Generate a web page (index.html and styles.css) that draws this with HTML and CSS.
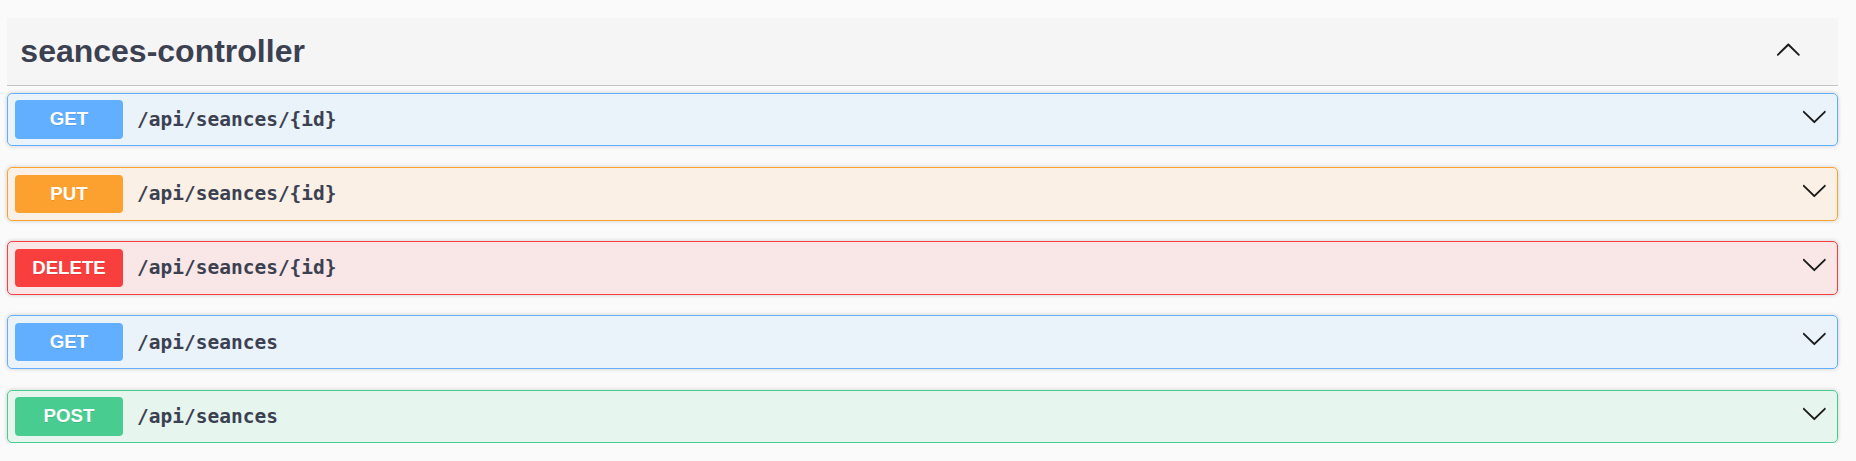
FILE: index.html
```html
<!DOCTYPE html>
<html>
<head>
<meta charset="utf-8">
<link rel="stylesheet" href="styles.css">
</head>
<body>
<div class="wrapper">
  <section class="tag-section">
    <h3 class="tag">
      <span class="tag-title">seances-controller</span>
      <svg class="tag-arrow" viewBox="0 0 20 20" width="26.67" height="26.67"><path transform="rotate(180 10 10)" d="M17.418 6.109c.272-.268.709-.268.979 0s.271.701 0 .969l-7.908 7.83c-.27.268-.707.268-.979 0l-7.908-7.830c-.27-.268-.27-.701 0-.969.271-.268.709-.268.979 0L10 13.25l7.418-7.141z"/></svg>
    </h3>
    <div class="ops">
      <div class="opblock get">
        <span class="method">GET</span>
        <span class="path">/api/seances/{id}</span>
        <svg class="op-arrow" viewBox="0 0 20 20" width="26.67" height="26.67"><path d="M17.418 6.109c.272-.268.709-.268.979 0s.271.701 0 .969l-7.908 7.83c-.27.268-.707.268-.979 0l-7.908-7.83c-.27-.268-.27-.701 0-.969.271-.268.709-.268.979 0L10 13.25l7.418-7.141z"/></svg>
      </div>
      <div class="opblock put">
        <span class="method">PUT</span>
        <span class="path">/api/seances/{id}</span>
        <svg class="op-arrow" viewBox="0 0 20 20" width="26.67" height="26.67"><path d="M17.418 6.109c.272-.268.709-.268.979 0s.271.701 0 .969l-7.908 7.83c-.27.268-.707.268-.979 0l-7.908-7.83c-.27-.268-.27-.701 0-.969.271-.268.709-.268.979 0L10 13.25l7.418-7.141z"/></svg>
      </div>
      <div class="opblock delete">
        <span class="method">DELETE</span>
        <span class="path">/api/seances/{id}</span>
        <svg class="op-arrow" viewBox="0 0 20 20" width="26.67" height="26.67"><path d="M17.418 6.109c.272-.268.709-.268.979 0s.271.701 0 .969l-7.908 7.83c-.27.268-.707.268-.979 0l-7.908-7.83c-.27-.268-.27-.701 0-.969.271-.268.709-.268.979 0L10 13.25l7.418-7.141z"/></svg>
      </div>
      <div class="opblock get">
        <span class="method">GET</span>
        <span class="path">/api/seances</span>
        <svg class="op-arrow" viewBox="0 0 20 20" width="26.67" height="26.67"><path d="M17.418 6.109c.272-.268.709-.268.979 0s.271.701 0 .969l-7.908 7.83c-.27.268-.707.268-.979 0l-7.908-7.83c-.27-.268-.27-.701 0-.969.271-.268.709-.268.979 0L10 13.25l7.418-7.141z"/></svg>
      </div>
      <div class="opblock post">
        <span class="method">POST</span>
        <span class="path">/api/seances</span>
        <svg class="op-arrow" viewBox="0 0 20 20" width="26.67" height="26.67"><path d="M17.418 6.109c.272-.268.709-.268.979 0s.271.701 0 .969l-7.908 7.83c-.27.268-.707.268-.979 0l-7.908-7.83c-.27-.268-.27-.701 0-.969.271-.268.709-.268.979 0L10 13.25l7.418-7.141z"/></svg>
      </div>
    </div>
  </section>
</div>
</body>
</html>
```

FILE: styles.css
```css
html, body {
  margin: 0;
  padding: 0;
  background: #fafafa;
}

.wrapper {
  padding: 18px 18px 0 7px;
  font-family: "Liberation Sans", Arial, sans-serif;
  color: #3b4151;
}

.tag {
  display: flex;
  align-items: center;
  margin: 0 0 7px 0;
  padding: 13.33px 36px 13.33px 13.33px;
  height: 40px;
  background: #f5f5f5;
  border-bottom: 1px solid #c3c4c8;
  font-size: 32px;
  font-weight: 700;
  color: #3b4151;
}

.tag-title {
  flex: 1;
  line-height: 40px;
}

.tag-arrow {
  fill: #1b1b1b;
  margin-bottom: 3px;
}

.ops {
  display: flex;
  flex-direction: column;
  gap: 20.5px;
}

.opblock {
  display: flex;
  align-items: center;
  padding: 6.67px 9px 6.67px 7px;
  border: 1px solid;
  border-radius: 5px;
  box-shadow: 0 0 4px rgba(0, 0, 0, 0.19);
}

.method {
  width: 108px;
  padding: 8px 0;
  border-radius: 4px;
  text-align: center;
  font-family: "Liberation Sans", Arial, sans-serif;
  font-size: 18.67px;
  font-weight: 700;
  color: #fff;
  text-shadow: 0 1px 0 rgba(0, 0, 0, 0.1);
  line-height: 22.4px;
}

.path {
  flex: 1;
  padding: 0 13.33px 0 14px;
  font-family: "DejaVu Sans Mono", "Liberation Mono", monospace;
  font-size: 19.5px;
  font-weight: 700;
  color: #3b4151;
}

.op-arrow {
  fill: #1b1b1b;
  margin-bottom: 7px;
}

.get { background: rgba(97, 175, 254, 0.1); border-color: #61affe; }
.get .method { background: #61affe; }

.put { background: rgba(252, 161, 48, 0.1); border-color: #fca130; }
.put .method { background: #fca130; }

.delete { background: rgba(249, 62, 62, 0.1); border-color: #f93e3e; }
.delete .method { background: #f93e3e; }

.post { background: rgba(73, 204, 144, 0.1); border-color: #49cc90; }
.post .method { background: #49cc90; }
```
